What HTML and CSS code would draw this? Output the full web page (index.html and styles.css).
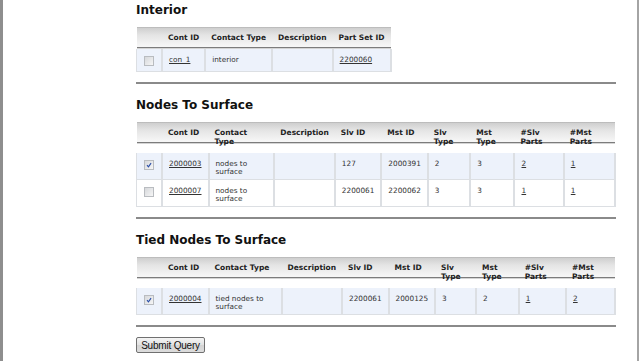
FILE: index.html
```html
<!DOCTYPE html>
<html>
  <head>
    <meta charset="UTF-8">
    <title>Contacts</title>
    <link rel="stylesheet" href="styles.css">
  </head>
  <body>
    <div class="page">
      <form class="content" onsubmit="return false">
        <section class="group">
          <h2>Interior</h2>
          <table class="grid">
            <thead>
              <tr><th class="sel"></th><th>Cont ID</th><th>Contact Type</th><th>Description</th><th>Part Set ID</th></tr>
            </thead>
            <tbody>
              <tr class="odd">
                <td class="sel"><span class="cb"></span></td>
                <td><a href="#">con_1</a></td>
                <td>interior</td>
                <td></td>
                <td><a href="#">2200060</a></td>
              </tr>
            </tbody>
          </table>
        </section>

        <section class="group">
          <h2>Nodes To Surface</h2>
          <table class="grid wide">
            <thead>
              <tr><th class="sel"></th><th>Cont ID</th><th>Contact Type</th><th>Description</th><th>Slv ID</th><th>Mst ID</th><th>Slv Type</th><th>Mst Type</th><th>#Slv Parts</th><th>#Mst Parts</th></tr>
            </thead>
            <tbody>
              <tr class="odd">
                <td class="sel"><span class="cb checked"><svg viewBox="0 0 10 10"><path d="M2.5 5.2 L4.3 7.3 L7.6 2.6" /></svg></span></td>
                <td><a href="#">2000003</a></td>
                <td>nodes to surface</td>
                <td></td>
                <td>127</td>
                <td>2000391</td>
                <td>2</td>
                <td>3</td>
                <td><a href="#">2</a></td>
                <td><a href="#">1</a></td>
              </tr>
              <tr>
                <td class="sel"><span class="cb"></span></td>
                <td><a href="#">2000007</a></td>
                <td>nodes to surface</td>
                <td></td>
                <td>2200061</td>
                <td>2200062</td>
                <td>3</td>
                <td>3</td>
                <td><a href="#">1</a></td>
                <td><a href="#">1</a></td>
              </tr>
            </tbody>
          </table>
        </section>

        <section class="group">
          <h2>Tied Nodes To Surface</h2>
          <table class="grid wide">
            <thead>
              <tr><th class="sel"></th><th>Cont ID</th><th>Contact Type</th><th>Description</th><th>Slv ID</th><th>Mst ID</th><th>Slv Type</th><th>Mst Type</th><th>#Slv Parts</th><th>#Mst Parts</th></tr>
            </thead>
            <tbody>
              <tr class="odd">
                <td class="sel"><span class="cb checked"><svg viewBox="0 0 10 10"><path d="M2.5 5.2 L4.3 7.3 L7.6 2.6" /></svg></span></td>
                <td><a href="#">2000004</a></td>
                <td>tied nodes to surface</td>
                <td></td>
                <td>2200061</td>
                <td>2000125</td>
                <td>3</td>
                <td>2</td>
                <td><a href="#">1</a></td>
                <td><a href="#">2</a></td>
              </tr>
            </tbody>
          </table>
        </section>

        <button type="submit" class="submit">Submit Query</button>
      </form>
    </div>
  </body>
</html>
```

FILE: styles.css
```css
html, body {
  margin: 0;
  background: #fff;
}
.page {
  width: 639px;
  min-height: 361px;
  box-sizing: border-box;
  border-left: 3px solid #8e8e8e;
  border-right: 2px solid #a4a4a4;
  padding: 3px 0 0 133px;
  font-family: "DejaVu Sans", Verdana, sans-serif;
  color: #222;
}
.content {
  width: 480px;
}
.group {
  border-bottom: 2px solid #8a8a8a;
  padding-bottom: 10px;
  margin-bottom: 14px;
}
.group:last-of-type {
  margin-bottom: 10px;
}
.group h2 {
  font-size: 12px;
  line-height: 14px;
  font-weight: bold;
  color: #111;
  margin: 0 0 10px;
}
.grid {
  border-collapse: collapse;
  font-size: 7.3px;
  line-height: 8px;
}
.grid.wide {
  width: 100%;
}
.grid th {
  text-align: left;
  vertical-align: top;
  font-size: 7.5px;
  line-height: 9px;
  font-weight: bold;
  color: #222;
  padding: 6px 6px 7px;
  background: linear-gradient(#aaa 0, #cfcfcf 1px, #e4e4e4 8px, #f6f6f6 19px, #f6f6f6 20px, #7c7c7c 20px, #7c7c7c 21px, #d4d4d4 21px, #d4d4d4 22px) no-repeat;
  background-size: 100% 22px;
}
.grid td {
  vertical-align: top;
  padding: 7px 6px 3px;
  border: 1px solid #dcdfe3;
  border-width: 1px 2px 1px 1px;
  color: #333;
}
.grid tbody tr:first-child td {
  border-top: 0;
}
.grid tr.odd td {
  background: #edf2fb;
}
.grid a {
  color: #333;
}
.grid .sel {
  width: 12px;
  padding-left: 7px;
  padding-right: 5px;
}
.grid td.sel {
  padding-bottom: 5px;
}
.cb {
  display: block;
  width: 8px;
  height: 8px;
  border: 1px solid #b9bcc0;
  background: linear-gradient(135deg, #d6d8db, #f6f6f6);
}
.cb svg {
  display: block;
  width: 8px;
  height: 8px;
}
.cb path {
  fill: none;
  stroke: #2a4ea8;
  stroke-width: 1.4;
}
.submit {
  display: block;
  width: 69px;
  height: 16px;
  padding: 0;
  font-family: "Liberation Sans", Arial, sans-serif;
  font-size: 10px;
  letter-spacing: -0.2px;
  color: #111;
  border: 1px solid #707070;
  border-radius: 2px;
  background: linear-gradient(#f4f4f4, #e2e2e2 50%, #d4d4d4 51%, #dcdcdc);
}
```
